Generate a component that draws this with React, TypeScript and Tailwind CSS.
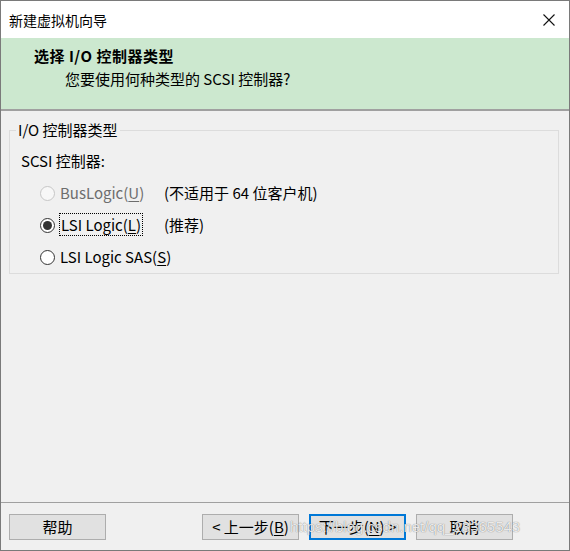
import React from 'react';

const font = "font-['Noto_Sans_CJK_SC','Noto_Sans',sans-serif]";

type RadioProps = {
  checked?: boolean;
  disabled?: boolean;
};

const Radio: React.FC<RadioProps> = ({ checked, disabled }) => (
  <span
    className={`flex h-[15px] w-[15px] shrink-0 items-center justify-center rounded-full border ${
      disabled ? 'border-[#c6c6c6] bg-[#f7f7f7]' : 'border-[#333333] bg-white'
    }`}
  >
    {checked && <span className="h-[9px] w-[9px] rounded-full bg-[#333333]" />}
  </span>
);

const Btn: React.FC<{ children: React.ReactNode; focused?: boolean; className?: string }> = ({
  children,
  focused,
  className = '',
}) => (
  <button
    className={`flex h-[26px] w-[97px] items-center justify-center bg-[#e1e1e1] text-[15px] leading-[20px] text-black ${
      focused ? 'border-2 border-[#0078d7]' : 'border border-[#adadad]'
    } ${className}`}
  >
    {children}
  </button>
);

export default function App() {
  return (
    <div
      className={`relative flex h-[551px] w-[570px] flex-col border border-[#7a7a7a] bg-[#f0f0f0] text-black ${font}`}
    >
      {/* title bar */}
      <div className="flex h-[37px] items-center justify-between bg-white pl-[8px] pr-[13px]">
        <span className="text-[14px] leading-[20px]">新建虚拟机向导</span>
        <svg width="14" height="14" viewBox="0 0 14 14" className="mt-[1px]">
          <path d="M1.5 1.5 L12.5 12.5 M12.5 1.5 L1.5 12.5" stroke="#111" strokeWidth="1.1" fill="none" />
        </svg>
      </div>

      {/* header */}
      <div className="h-[73px] border-b-2 border-[#a0a0a0] bg-[#cce8cf] pt-[8px]">
        <div className="pl-[33px] text-[15px] font-bold leading-[20px] tracking-[0.5px]">选择 I/O 控制器类型</div>
        <div className="mt-[3px] pl-[64px] text-[15px] leading-[20px]">您要使用何种类型的 SCSI 控制器?</div>
      </div>

      {/* content */}
      <div className="flex-1 pt-[9px]">
        <fieldset className="ml-[8px] mr-[10px] border border-[#dcdcdc]">
          <legend className="ml-[6px] px-[2px] text-[15px] leading-[20px]">I/O 控制器类型</legend>
          <div className="mt-[11px] pl-[11px] text-[15px] leading-[20px]">SCSI 控制器:</div>
          <div className="mt-[6px] flex flex-col text-[15px] leading-[20px]">
            <div className="flex h-[32px] items-center pl-[30px]">
              <Radio disabled />
              <span className="ml-[4px] w-[105px] px-[1px] text-[#6d6d6d]">
                BusLogic(<span className="underline underline-offset-2">U</span>)
              </span>
              <span>(不适用于 64 位客户机)</span>
            </div>
            <div className="flex h-[32px] items-center pl-[30px]">
              <Radio checked />
              <span className="ml-[4px] w-[105px]">
                <span className="border border-dotted border-black px-[1px]">
                  LSI Logic(<span className="underline underline-offset-2">L</span>)
                </span>
              </span>
              <span>(推荐)</span>
            </div>
            <div className="flex h-[32px] items-center pl-[30px]">
              <Radio />
              <span className="ml-[4px] px-[1px]">
                LSI Logic SAS(<span className="underline underline-offset-2">S</span>)
              </span>
            </div>
          </div>
        </fieldset>
      </div>

      {/* footer */}
      <div className="flex h-[48px] items-start border-t border-[#a0a0a0] pl-[8px] pr-[56px] pt-[11px]">
        <Btn>帮助</Btn>
        <div className="ml-auto flex gap-[10px]">
          <Btn>
            &lt; 上一步(<span className="underline underline-offset-2">B</span>)
          </Btn>
          <Btn focused>
            下一步(<span className="underline underline-offset-2">N</span>) &gt;
          </Btn>
          <Btn>取消</Btn>
        </div>
      </div>

      {/* watermark */}
      <div className="pointer-events-none absolute left-[289px] top-[516px] font-['Liberation_Sans',sans-serif] text-[15px] leading-[20px] text-white/85 [text-shadow:0_0_1px_rgba(0,0,0,0.6)]">
        https://blog.csdn.net/qq_23365543
      </div>
    </div>
  );
}
